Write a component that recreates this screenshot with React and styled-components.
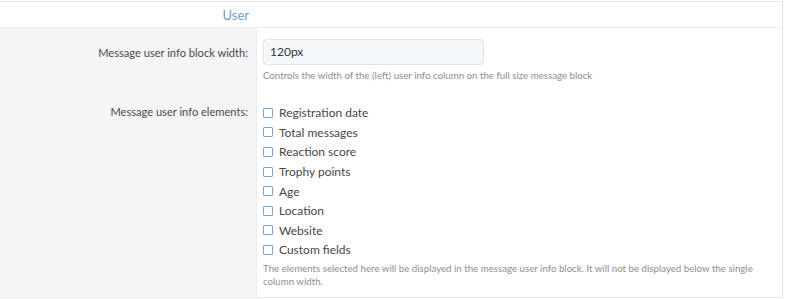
import React from "react";
import styled, { createGlobalStyle } from "styled-components";

const Global = createGlobalStyle`
  html, body { margin: 0; padding: 0; background: #fff; }
  body { font-family: Lato, "Open Sans", sans-serif; }
`;

const Page = styled.div`
  width: 783px;
  padding-top: 1px;
`;

const Block = styled.div`
  border-top: 1px solid #e4e4e4;
  border-right: 1px solid #e2e2e2;
  border-bottom: 1px solid #e6e6e6;
`;

const Header = styled.div`
  display: grid;
  grid-template-columns: 257px 1fr;
  height: 25px;
  border-bottom: 1px solid #eeeeee;
  align-items: center;
`;

const HeaderTitle = styled.div`
  text-align: right;
  padding-right: 8px;
  font-size: 13px;
  color: #6c9fcb;
`;

const Row = styled.div`
  display: grid;
  grid-template-columns: 257px 1fr;
`;

const LabelCell = styled.div`
  background: #f5f5f5;
  border-right: 1px solid #ececec;
  text-align: right;
  padding: ${(p) => p.$pt}px 8px 0 0;
  font-size: 11.1px;
  color: #4a4a4a;
  line-height: 19px;
`;

const FieldCell = styled.div`
  padding: ${(p) => p.$pt}px 20px ${(p) => p.$pb}px 6px;
`;

const TextInput = styled.div`
  width: 207px;
  height: 24px;
  box-sizing: content-box;
  border: 1px solid #dde3e8;
  border-radius: 4px;
  background: #f5f8fb;
  padding: 0 6px;
  font-size: 12px;
  line-height: 24px;
  color: #333;
`;

const Hint = styled.div`
  margin-top: ${(p) => p.$mt}px;
  font-size: 9.7px;
  line-height: 13px;
  color: #8e8e8e;
`;

const CheckList = styled.div`
  display: flex;
  flex-direction: column;
`;

const CheckRow = styled.label`
  display: flex;
  align-items: center;
  height: 19.6px;
  font-size: 12px;
  color: #474747;
`;

const Box = styled.span`
  width: 8px;
  height: 8px;
  border: 1.5px solid #78a8d5;
  border-radius: 1px;
  background: #fff;
  margin-right: 6px;
  flex: none;
`;

const items = [
  "Registration date",
  "Total messages",
  "Reaction score",
  "Trophy points",
  "Age",
  "Location",
  "Website",
  "Custom fields",
];

export default function App() {
  return (
    <Page>
      <Global />
      <Block>
        <Header>
          <HeaderTitle>User</HeaderTitle>
          <div />
        </Header>
        <Row>
          <LabelCell $pt={15}>Message user info block width:</LabelCell>
          <FieldCell $pt={11} $pb={18}>
            <TextInput>120px</TextInput>
            <Hint $mt={4}>
              Controls the width of the (left) user info column on the full size message block
            </Hint>
          </FieldCell>
        </Row>
        <Row>
          <LabelCell $pt={2}>Message user info elements:</LabelCell>
          <FieldCell $pt={3} $pb={9}>
            <CheckList>
              {items.map((t) => (
                <CheckRow key={t}>
                  <Box />
                  {t}
                </CheckRow>
              ))}
            </CheckList>
            <Hint $mt={2}>
              The elements selected here will be displayed in the message user info block. It will not be displayed below the single column width.
            </Hint>
          </FieldCell>
        </Row>
      </Block>
    </Page>
  );
}
